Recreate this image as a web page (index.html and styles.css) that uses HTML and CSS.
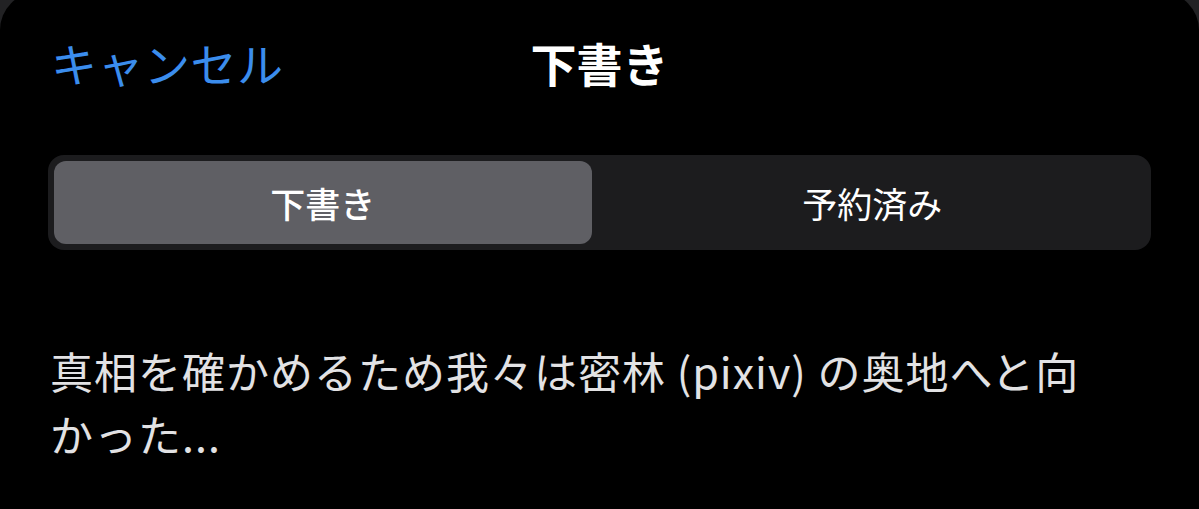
FILE: index.html
```html
<!DOCTYPE html>
<html lang="ja">
<head>
<meta charset="utf-8">
<title>下書き</title>
<link rel="stylesheet" href="styles.css">
</head>
<body>
<div class="sheet">
  <header class="nav">
    <span class="nav-cancel">キャンセル</span>
    <span class="nav-title">下書き</span>
    <span class="nav-spacer"></span>
  </header>
  <div class="segmented">
    <div class="segment segment-selected">下書き</div>
    <div class="segment">予約済み</div>
  </div>
  <p class="draft-text">真相を確かめるため我々は密林 (pixiv) の奥地へと向かった...</p>
</div>
</body>
</html>
```

FILE: styles.css
```css
html, body {
  margin: 0;
  padding: 0;
  height: 100%;
}

body {
  background: #222224;
  font-family: "Noto Sans CJK JP", "Noto Sans", sans-serif;
  overflow: hidden;
}

.sheet {
  margin-top: -8px;
  background: #000;
  border-radius: 38px 38px 0 0;
  min-height: 530px;
  padding-top: 42px;
  box-sizing: border-box;
}

.nav {
  display: grid;
  grid-template-columns: 1fr auto 1fr;
  align-items: center;
  height: 56px;
  line-height: 56px;
}

.nav-cancel {
  font-size: 46px;
  color: #3b8ded;
  padding-left: 51px;
  justify-self: start;
  letter-spacing: 0.5px;
}

.nav-title {
  font-size: 46px;
  font-weight: 700;
  color: #fff;
}

.segmented {
  display: grid;
  grid-template-columns: 1fr 1fr;
  margin: 65px 48px 0;
  height: 95px;
  padding: 6px;
  box-sizing: border-box;
  background: #1c1c1e;
  border-radius: 16px;
}

.segment {
  display: flex;
  align-items: center;
  justify-content: center;
  font-size: 35px;
  color: #fff;
  border-radius: 12px;
}

.segment-selected {
  background: #5f5f64;
  margin-right: 8px;
  font-weight: 500;
}

.draft-text {
  margin: 89px 0 0;
  padding: 0 99px 0 50px;
  font-size: 43px;
  letter-spacing: 1px;
  line-height: 63px;
  color: #e2e2e4;
}
```
